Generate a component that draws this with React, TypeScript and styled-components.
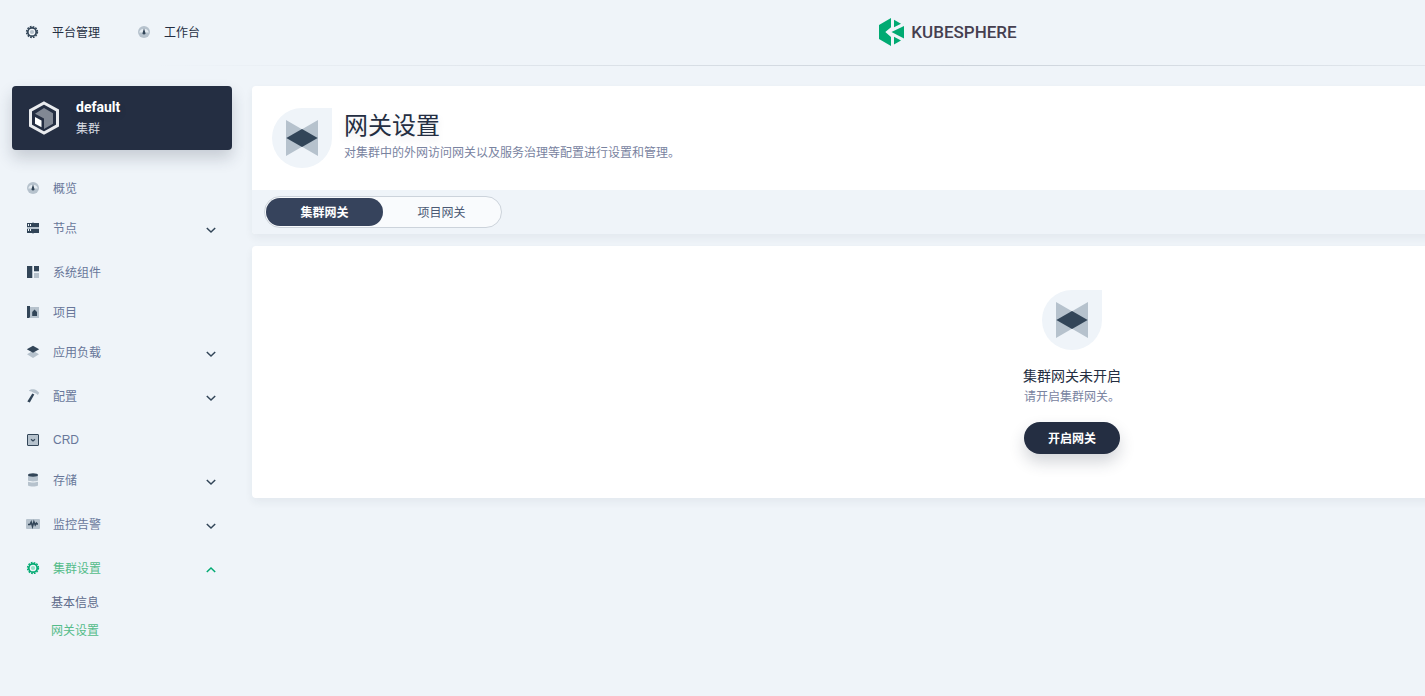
import React from "react";
import styled, { createGlobalStyle, css } from "styled-components";

const dark = "#324558";
const light = "#b6c2cd";
const green = "#00aa72";
const greenLight = "#90e0c5";
const latinFirst = `Roboto, "Noto Sans CJK SC", sans-serif`;

const GlobalStyle = createGlobalStyle`
  * { box-sizing: border-box; }
  body {
    margin: 0;
    background: #eff4f9;
    color: #242e42;
    font-family: "Noto Sans CJK SC", sans-serif;
    font-size: 12px;
    line-height: 20px;
  }
  h1, h2, p, ul { margin: 0; padding: 0; }
  ul { list-style: none; }
  a { color: inherit; text-decoration: none; }
  button { font: inherit; cursor: pointer; }
`;

const Viewport = styled.div`
  overflow: hidden;
`;

const Page = styled.div`
  min-width: 1904px;
  min-height: 100vh;
`;

const Header = styled.header`
  display: grid;
  grid-template-columns: 1fr auto 1fr;
  align-items: center;
  height: 66px;
  padding: 0 20px 2px 12px;
  background: linear-gradient(to right, rgba(204, 211, 219, 0) 8%, #ccd3db 50%, rgba(204, 211, 219, 0) 92%)
    bottom / 100% 1px no-repeat;
`;

const HeaderNav = styled.nav`
  display: flex;
  gap: 12px;
`;

const HeaderButton = styled.button`
  display: flex;
  align-items: center;
  gap: 12px;
  height: 32px;
  padding: 0 12px;
  border: 0;
  background: none;
  color: #242e42;
`;

const Logo = styled.a`
  display: flex;
  align-items: center;
  gap: 6px;
  color: #453f50;
  font-family: Roboto, sans-serif;
  font-size: 17px;
  font-weight: 500;
  line-height: 28px;
`;

const Body = styled.div`
  display: flex;
  gap: 20px;
  padding: 20px 12px;
`;

const Sidebar = styled.aside`
  flex: 0 0 220px;
`;

const ClusterCard = styled.button`
  display: flex;
  align-items: center;
  gap: 12px;
  width: 100%;
  height: 64px;
  padding: 0 12px;
  border: 0;
  border-radius: 4px;
  background: #242e42;
  box-shadow: 0 8px 16px rgba(36, 46, 66, 0.2);
  color: #d8dce2;
  font-family: ${latinFirst};
  text-align: left;
`;

const ClusterName = styled.strong`
  display: block;
  padding-bottom: 2px;
  color: #fff;
  font-size: 14px;
  font-weight: 700;
  text-shadow: 0 4px 8px rgba(36, 46, 66, 0.1);
`;

const ClusterKind = styled.span`
  display: block;
`;

const Menu = styled.ul`
  padding-top: 18px;
`;

const MenuItem = styled.li<{ $group?: boolean }>`
  margin-bottom: ${(p) => (p.$group ? 4 : 0)}px;
`;

const menuRow = css<{ $active?: boolean }>`
  display: flex;
  align-items: center;
  gap: 12px;
  width: 100%;
  height: 40px;
  padding: 0 13px;
  border: 0;
  background: none;
  color: ${(p) => (p.$active ? "#55bc8a" : "#68779a")};
`;

const MenuLink = styled.a<{ $active?: boolean }>`
  ${menuRow}
`;

const MenuToggle = styled.button<{ $active?: boolean }>`
  ${menuRow}
`;

const MenuText = styled.span<{ $latin?: boolean }>`
  flex: 1;
  font-family: ${(p) => (p.$latin ? `"Liberation Sans", sans-serif` : "inherit")};
  text-align: left;
`;

const SubMenu = styled.ul`
  padding-left: 39px;
`;

const SubLink = styled.a<{ $active?: boolean }>`
  display: block;
  color: ${(p) => (p.$active ? "#55bc8a" : "#5f6c8c")};
  line-height: 28px;
`;

const Main = styled.main`
  display: flex;
  flex: 1;
  flex-direction: column;
  gap: 12px;
`;

const Panel = styled.section`
  border-radius: 4px;
  background: #fff;
  box-shadow: 0 4px 8px rgba(36, 46, 66, 0.06);
  overflow: hidden;
`;

const Banner = styled.div`
  display: flex;
  align-items: center;
  gap: 12px;
  padding: 22px 20px;
`;

const BannerText = styled.div`
  padding-bottom: 4px;
`;

const Drop = styled.div`
  display: flex;
  align-items: center;
  justify-content: center;
  width: 60px;
  height: 60px;
  border-radius: 30px 0 30px 30px;
  background: #eff4f9;
`;

const Title = styled.h1`
  font-family: ${latinFirst};
  font-size: 24px;
  font-weight: 400;
  line-height: 32px;
  text-shadow: 0 4px 8px rgba(36, 46, 66, 0.1);
`;

const Hint = styled.p`
  color: #79839f;
`;

const TabBar = styled.div`
  padding: 6px 12px;
  background: #eff4f9;
`;

const Tabs = styled.div`
  display: inline-flex;
  height: 32px;
  padding: 1px;
  border: 1px solid #ccd3db;
  border-radius: 16px;
  background: #f9fbfd;
  vertical-align: top;
`;

const Tab = styled.button<{ $active?: boolean }>`
  width: 117px;
  padding: 0;
  border: 0;
  border-radius: 14px;
  background: ${(p) => (p.$active ? "#36435c" : "transparent")};
  color: ${(p) => (p.$active ? "#fff" : "#4a5974")};
  font-weight: ${(p) => (p.$active ? 700 : 400)};
`;

const Empty = styled(Panel)`
  display: flex;
  flex-direction: column;
  align-items: center;
  padding: 44px 20px;
`;

const EmptyTitle = styled.h2`
  margin-top: 16px;
  font-family: ${latinFirst};
  font-size: 14px;
  font-weight: 400;
  line-height: 20px;
`;

const PrimaryButton = styled.button`
  height: 32px;
  margin-top: 16px;
  padding: 0 24px;
  border: 0;
  border-radius: 16px;
  background: #242e42;
  box-shadow: 0 8px 16px rgba(36, 46, 66, 0.2);
  color: #fff;
  font-weight: 700;
`;

const icon = { width: 16, height: 16, viewBox: "0 0 16 16", "aria-hidden": true } as const;

const GearIcon = ({ active }: { active?: boolean }) => (
  <svg {...icon} fill="none" stroke={active ? green : dark}>
    <circle cx="8" cy="8" r="4.2" strokeWidth="1.7" />
    <circle cx="8" cy="8" r="5.4" strokeWidth="1.5" strokeDasharray="1.700 1.127" />
    <circle cx="8" cy="8" r="2.1" fill={active ? greenLight : light} stroke="none" />
  </svg>
);

const DashboardIcon = () => (
  <svg {...icon}>
    <circle cx="8" cy="8" r="6" fill={light} />
    <path d="M3.200 8.600a4.900 4.900 0 0 1 9.600 0z" fill="#e4ebf1" />
    <path d="M8 4.200l1.300 4.400a1.400 1.400 0 1 1-2.600 0z" fill={dark} />
  </svg>
);

const NodesIcon = () => (
  <svg {...icon}>
    <path d="M7 2h2v12H7z" fill={light} />
    <path d="M2 3h12v4H2zM2 9h12v4H2z" fill={dark} />
    <path d="M2 7h12v2H2z" fill={light} />
    <path d="M3 4h1v2H3zM5 4h1v2H5zM3 9h1v2H3zM5 9h1v2H5z" fill="#eff4f9" />
  </svg>
);

const ComponentsIcon = () => (
  <svg {...icon}>
    <path d="M2 2h5v12H2zM9 2h5v5H9z" fill={dark} />
    <path d="M7 2h1v12H7zM9 9h5v5H9zM9 7h5v1H9z" fill={light} />
  </svg>
);

const ProjectIcon = () => (
  <svg {...icon}>
    <path d="M4 3h10v11H2z" fill={light} />
    <path d="M2 2h3v11l-1 1H2z" fill={dark} />
    <path d="M9.500 5.400L12 8v4H7.200V8z" fill={dark} />
  </svg>
);

const LayersIcon = () => (
  <svg {...icon}>
    <path d="M8 6.800l6 3.500-6 3.700-6-3.700z" fill={light} />
    <path d="M8 1.800l6.200 3.500L8 8.800 1.800 5.300z" fill={dark} />
  </svg>
);

const HammerIcon = () => (
  <svg {...icon}>
    <path d="M4 2.400c2-1.500 5.800-1.500 7.800.1l2.400 2.300-1.300 2.200-1.900-1.500-2.900-.9c-1-.8-2.200-1.300-4.100-1.500z" fill={light} />
    <path d="M7.300 5.400l2 1-4.500 8.200-2.500-1.100z" fill={dark} />
  </svg>
);

const CrdIcon = () => (
  <svg {...icon}>
    <rect x="2.500" y="2.500" width="11" height="11" rx="0.500" fill={light} stroke={dark} />
    <path d="M6 7.200l2 1.800 2-1.800" fill="none" stroke={dark} strokeWidth="1.200" />
  </svg>
);

const StorageIcon = () => (
  <svg {...icon}>
    <path d="M3 3h10v5.500c-2 1.200-8 1.200-10 0zM3 9.700c2.500 1 7.500 1 10 0v3.800c-2 1.300-8 1.300-10 0z" fill={light} />
    <ellipse cx="8" cy="3" rx="5" ry="1.700" fill={dark} />
  </svg>
);

const MonitorIcon = () => (
  <svg {...icon}>
    <rect x="1" y="3" width="14" height="10" rx="1" fill={light} />
    <path d="M3 8.500h2L6.200 6 7.500 10.500 8.900 5.800 10.200 9l1.200-2 .8 1H13" fill="none" stroke={dark} strokeWidth="1.500" />
  </svg>
);

const ChevronIcon = ({ up }: { up?: boolean }) => (
  <svg {...icon} fill="none" stroke={up ? green : dark} strokeWidth="1.500">
    <path d={up ? "M3.800 12l4.200-4 4.200 4" : "M3.800 8l4.200 4 4.200-4"} />
  </svg>
);

const GatewayIcon = () => (
  <svg width="40" height="40" viewBox="0 0 40 40" aria-hidden="true">
    <path d="M4 2l16 9.200L36 2v36l-16-9.200L4 38z" fill={light} />
    <path d="M20 11l15.700 9L20 29 4.300 20z" fill={dark} />
  </svg>
);

const ClusterIcon = () => (
  <svg width="40" height="40" viewBox="0 0 40 40" aria-hidden="true">
    <path d="M20 5l13.500 7.500v15L20 35 6.500 27.500v-15z" fill="none" stroke="#e9ebee" strokeWidth="3" />
    <path d="M20 10l9 5.200v10.500L20 31V20.500l-9-4.800z" fill="#818894" />
    <path d="M11 19l6.500 3.600v6.600L11 25.700z" fill="#fff" />
  </svg>
);

const LogoMark = () => (
  <svg width="26" height="28" viewBox="0 0 26 28" aria-hidden="true" fill={green}>
    <path d="M12 0v9.300L6.300 14l5.700 5V28L0 21V7z" />
    <path d="M15 1.700l7 4.100-7 3.400z" />
    <path d="M25 8v12.500L12.500 14z" />
    <path d="M15 18.700l7 3.800-7 4z" />
  </svg>
);

type Entry = { label: string; icon: React.ReactNode; group?: boolean; open?: boolean; latin?: boolean };

const entries: Entry[] = [
  { label: "概览", icon: <DashboardIcon /> },
  { label: "节点", icon: <NodesIcon />, group: true },
  { label: "系统组件", icon: <ComponentsIcon /> },
  { label: "项目", icon: <ProjectIcon /> },
  { label: "应用负载", icon: <LayersIcon />, group: true },
  { label: "配置", icon: <HammerIcon />, group: true },
  { label: "CRD", icon: <CrdIcon />, latin: true },
  { label: "存储", icon: <StorageIcon />, group: true },
  { label: "监控告警", icon: <MonitorIcon />, group: true },
  { label: "集群设置", icon: <GearIcon active />, group: true, open: true },
];

export default function App() {
  return (
    <Viewport>
      <GlobalStyle />
      <Page>
        <Header>
          <HeaderNav>
            <HeaderButton>
              <GearIcon />
              平台管理
            </HeaderButton>
            <HeaderButton>
              <DashboardIcon />
              工作台
            </HeaderButton>
          </HeaderNav>
          <Logo href="#">
            <LogoMark />
            KUBESPHERE
          </Logo>
        </Header>
        <Body>
          <Sidebar>
            <ClusterCard>
              <ClusterIcon />
              <span>
                <ClusterName>default</ClusterName>
                <ClusterKind>集群</ClusterKind>
              </span>
            </ClusterCard>
            <Menu>
              {entries.map((e) => (
                <MenuItem key={e.label} $group={e.group && !e.open}>
                  {e.group ? (
                    <MenuToggle $active={e.open} aria-expanded={!!e.open}>
                      {e.icon}
                      <MenuText>{e.label}</MenuText>
                      <ChevronIcon up={e.open} />
                    </MenuToggle>
                  ) : (
                    <MenuLink href="#">
                      {e.icon}
                      <MenuText $latin={e.latin}>{e.label}</MenuText>
                    </MenuLink>
                  )}
                  {e.open && (
                    <SubMenu>
                      <li>
                        <SubLink href="#">基本信息</SubLink>
                      </li>
                      <li>
                        <SubLink href="#" $active>
                          网关设置
                        </SubLink>
                      </li>
                    </SubMenu>
                  )}
                </MenuItem>
              ))}
            </Menu>
          </Sidebar>
          <Main>
            <Panel>
              <Banner>
                <Drop>
                  <GatewayIcon />
                </Drop>
                <BannerText>
                  <Title>网关设置</Title>
                  <Hint>对集群中的外网访问网关以及服务治理等配置进行设置和管理。</Hint>
                </BannerText>
              </Banner>
              <TabBar>
                <Tabs>
                  <Tab $active>集群网关</Tab>
                  <Tab>项目网关</Tab>
                </Tabs>
              </TabBar>
            </Panel>
            <Empty>
              <Drop>
                <GatewayIcon />
              </Drop>
              <EmptyTitle>集群网关未开启</EmptyTitle>
              <Hint>请开启集群网关。</Hint>
              <PrimaryButton>开启网关</PrimaryButton>
            </Empty>
          </Main>
        </Body>
      </Page>
    </Viewport>
  );
}
